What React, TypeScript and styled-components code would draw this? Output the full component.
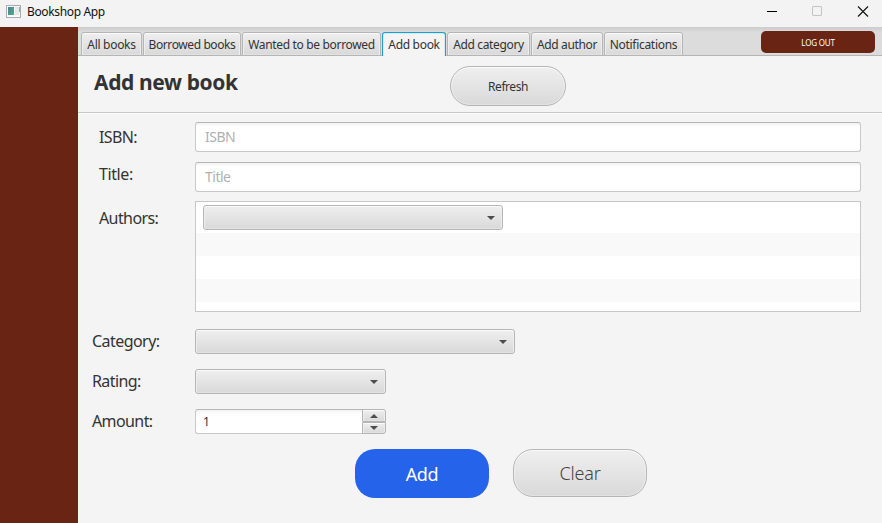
import React from "react";
import styled, { createGlobalStyle, css } from "styled-components";

const GlobalStyle = createGlobalStyle`
  *, *::before, *::after { box-sizing: border-box; }
  body { margin: 0; background: #f3f3f3; overflow: hidden; }
  button, input { font-family: inherit; margin: 0; }
`;

const raised = css`
  border: 1px solid #b5b5b5;
  background: linear-gradient(#efefef, #d9d9d9);
  box-shadow: inset 0 1px 0 #fbfbfb, inset 1px 0 0 #eeeeee, inset -1px 0 0 #eeeeee, inset 0 -1px 0 #e2e2e2;
`;

const Window = styled.div`
  display: flex;
  flex-direction: column;
  width: 882px;
  height: 523px;
  background: #f4f4f4;
  color: #333;
  font-family: "Noto Sans", "Open Sans", sans-serif;
`;

const TitleBar = styled.header`
  display: flex;
  align-items: center;
  flex: none;
  height: 27px;
  padding: 0 13px 4px 6px;
  background: #f3f3f3;
  color: #111;
`;

const AppName = styled.span`
  flex: 1;
  margin-left: 6px;
  font-size: 12px;
  line-height: 16px;
  letter-spacing: -0.35px;
`;

const WindowControls = styled.div`
  display: flex;
  gap: 35px;
  svg { display: block; }
`;

const Body = styled.div`
  display: flex;
  flex: 1;
  min-height: 0;
`;

const Sidebar = styled.aside`
  flex: none;
  width: 78px;
  background: #6a2414;
`;

const Main = styled.main`
  flex: 1;
  min-width: 0;
`;

const TabHeader = styled.nav`
  display: flex;
  align-items: flex-end;
  gap: 1px;
  height: 29px;
  padding-left: 3px;
  background: linear-gradient(#cbcbcb, #dcdcdc 5px);
  box-shadow: inset 0 -1px 0 #b5b5b5;
`;

const Tab = styled.button<{ $width: number; $tracking: number; $active?: boolean }>`
  width: ${(p) => p.$width}px;
  height: 24px;
  padding: 2px 0 0;
  ${raised}
  border-radius: 3px 3px 0 0;
  color: #333;
  font-size: 12px;
  line-height: 16px;
  letter-spacing: ${(p) => p.$tracking}px;
  white-space: nowrap;
  ${(p) =>
    p.$active &&
    css`
      border-color: #1e9ec9;
      border-bottom: 0;
      padding-bottom: 1px;
      background: #f4f4f4;
      box-shadow: inset 0 1px 0 #d3edf6, inset 1px 0 0 #d3edf6, inset -1px 0 0 #d3edf6;
    `}
`;

const LogOut = styled.button`
  align-self: flex-start;
  width: 114px;
  height: 22px;
  margin: 4px 7px 0 auto;
  padding: 0;
  border: 0;
  border-radius: 5px;
  background: #6a2414;
  color: #fff;
  font-size: 8px;
  letter-spacing: -0.2px;
`;

const PageHeader = styled.section`
  display: flex;
  height: 57px;
  padding-left: 16px;
  border-bottom: 1px solid #c8c8c8;
`;

const Heading = styled.h1`
  width: 356px;
  margin: 11px 0 0;
  font-size: 21px;
  font-weight: 700;
  line-height: 30px;
  letter-spacing: -0.38px;
  white-space: nowrap;
`;

const Refresh = styled.button`
  width: 116px;
  height: 40px;
  margin-top: 10px;
  padding: 0;
  ${raised}
  border-radius: 20px;
  color: #333;
  font-size: 12px;
  letter-spacing: -0.45px;
`;

const Form = styled.form`
  padding-top: 9px;
  box-shadow: inset 0 1px 0 #fcfcfc;
`;

const Row = styled.div<{ $gap: number }>`
  display: flex;
  align-items: flex-start;
  margin-bottom: ${(p) => p.$gap}px;
`;

const Label = styled.label<{ $left: number; $top: number; $tracking: number }>`
  flex: none;
  width: 117px;
  height: 22px;
  padding-left: ${(p) => p.$left}px;
  margin-top: ${(p) => p.$top}px;
  font-size: 16px;
  line-height: 22px;
  letter-spacing: ${(p) => p.$tracking}px;
`;

const TextField = styled.input`
  width: 666px;
  height: 30px;
  padding: 0 9px 2px;
  border: 1px solid #c8c8c8;
  border-top-color: #b6b6b6;
  border-radius: 3px;
  outline: 0;
  background: linear-gradient(#f2f2f2, #fff 4px);
  font-size: 14px;
  letter-spacing: -0.5px;
  color: #333;
  &::placeholder { color: #b0b0b0; opacity: 1; }
`;

const AuthorList = styled.div`
  width: 666px;
  height: 111px;
  border: 1px solid #c8c8c8;
  background: #fff;
  overflow: hidden;
`;

const ListCell = styled.div<{ $height: number }>`
  height: ${(p) => p.$height}px;
  padding: 3px 7px;
  &:nth-child(even) { background: #f9f9f9; }
`;

const Combo = styled.button<{ $width: number }>`
  display: flex;
  align-items: center;
  justify-content: flex-end;
  width: ${(p) => p.$width}px;
  height: 25px;
  padding: 1px 7px 0 0;
  ${raised}
  border-radius: 3px;
`;

const Spinner = styled.div`
  display: flex;
  width: 191px;
  height: 25px;
`;

const SpinnerValue = styled.input`
  width: 168px;
  height: 25px;
  padding: 0 7px;
  border: 1px solid #c8c8c8;
  border-top-color: #b6b6b6;
  border-right: 0;
  border-radius: 3px 0 0 3px;
  outline: 0;
  background: linear-gradient(#f2f2f2, #fff 4px);
  color: #333;
  font-size: 12px;
`;

const SpinnerButtons = styled.div`
  width: 24px;
  margin-left: -1px;
`;

const Step = styled.button<{ $down?: boolean }>`
  display: flex;
  align-items: center;
  justify-content: center;
  width: 24px;
  height: ${(p) => (p.$down ? 12 : 13)}px;
  padding: 0;
  ${raised}
  border-radius: ${(p) => (p.$down ? "0 0 3px 0" : "0 3px 0 0")};
`;

const Actions = styled.div`
  display: flex;
  gap: 24px;
  padding-left: 277px;
`;

const ActionButton = styled.button<{ $primary?: boolean }>`
  width: 134px;
  height: 48px;
  padding: 0;
  ${raised}
  border-radius: 20px;
  color: #444;
  font-size: 18px;
  font-weight: 300;
  letter-spacing: -0.2px;
  ${(p) =>
    p.$primary &&
    css`
      height: 49px;
      border: 0;
      background: #2563eb;
      box-shadow: none;
      color: #fff;
      font-weight: 400;
      letter-spacing: -0.4px;
    `}
`;

const Arrow = ({ up }: { up?: boolean }) => (
  <svg width="8" height="4" viewBox="0 0 8 4">
    <path d={up ? "M0 4h8l-4-4z" : "M0 0h8l-4 4z"} fill="#4d4d4d" />
  </svg>
);

const AppIcon = () => (
  <svg width="15" height="13" viewBox="0 0 15 13">
    <defs>
      <linearGradient id="pane" x1="0" y1="0" x2="1" y2="1">
        <stop stopColor="#4a7f9a" />
        <stop offset="1" stopColor="#59ad7c" />
      </linearGradient>
    </defs>
    <rect x=".5" y=".5" width="14" height="12" fill="#fafafa" stroke="#a9acb5" />
    <rect x="2" y="2" width="6" height="8" fill="url(#pane)" />
    <rect x="9" y="2" width="4" height="8" fill="#e6e8ea" />
    <rect x="13" y="2" width="1" height="5" fill="#82b89c" />
  </svg>
);

const tabs = [
  { label: "All books", width: 61, tracking: -0.3 },
  { label: "Borrowed books", width: 98, tracking: -0.4 },
  { label: "Wanted to be borrowed", width: 139, tracking: -0.33 },
  { label: "Add book", width: 64, tracking: -0.3, active: true },
  { label: "Add category", width: 83, tracking: -0.35 },
  { label: "Add author", width: 72, tracking: -0.35 },
  { label: "Notifications", width: 79, tracking: -0.3 },
];

export default function App() {
  return (
    <Window>
      <GlobalStyle />
      <TitleBar>
        <AppIcon />
        <AppName>Bookshop App</AppName>
        <WindowControls>
          <svg width="10" height="11" viewBox="0 0 10 11"><path d="M0 5.5h10" stroke="#000" /></svg>
          <svg width="10" height="11" viewBox="0 0 10 11"><rect x=".5" y=".5" width="9" height="9" rx=".5" fill="none" stroke="#c4c4c4" /></svg>
          <svg width="12" height="11" viewBox="0 0 12 11"><path d="M1 .5l10 10M11 .5l-10 10" stroke="#111" strokeWidth="1.1" /></svg>
        </WindowControls>
      </TitleBar>
      <Body>
        <Sidebar />
        <Main>
          <TabHeader>
            {tabs.map((t) => (
              <Tab key={t.label} $width={t.width} $tracking={t.tracking} $active={t.active}>{t.label}</Tab>
            ))}
            <LogOut>LOG OUT</LogOut>
          </TabHeader>
          <PageHeader>
            <Heading>Add new book</Heading>
            <Refresh>Refresh</Refresh>
          </PageHeader>
          <Form onSubmit={(e) => e.preventDefault()}>
            <Row $gap={10}>
              <Label $left={21} $top={4} $tracking={-0.65}>ISBN:</Label>
              <TextField placeholder="ISBN" />
            </Row>
            <Row $gap={9}>
              <Label $left={21} $top={1} $tracking={-0.4}>Title:</Label>
              <TextField placeholder="Title" />
            </Row>
            <Row $gap={17}>
              <Label $left={21} $top={6} $tracking={-0.6}>Authors:</Label>
              <AuthorList>
                <ListCell $height={31}><Combo type="button" $width={300}><Arrow /></Combo></ListCell>
                <ListCell $height={23} />
                <ListCell $height={23} />
                <ListCell $height={23} />
                <ListCell $height={9} />
              </AuthorList>
            </Row>
            <Row $gap={15}>
              <Label $left={14} $top={1} $tracking={-0.55}>Category:</Label>
              <Combo type="button" $width={320}><Arrow /></Combo>
            </Row>
            <Row $gap={15}>
              <Label $left={14} $top={1} $tracking={-0.6}>Rating:</Label>
              <Combo type="button" $width={191}><Arrow /></Combo>
            </Row>
            <Row $gap={15}>
              <Label $left={14} $top={1} $tracking={-0.6}>Amount:</Label>
              <Spinner>
                <SpinnerValue defaultValue="1" />
                <SpinnerButtons>
                  <Step type="button"><Arrow up /></Step>
                  <Step type="button" $down><Arrow /></Step>
                </SpinnerButtons>
              </Spinner>
            </Row>
            <Actions>
              <ActionButton $primary>Add</ActionButton>
              <ActionButton type="button">Clear</ActionButton>
            </Actions>
          </Form>
        </Main>
      </Body>
    </Window>
  );
}
